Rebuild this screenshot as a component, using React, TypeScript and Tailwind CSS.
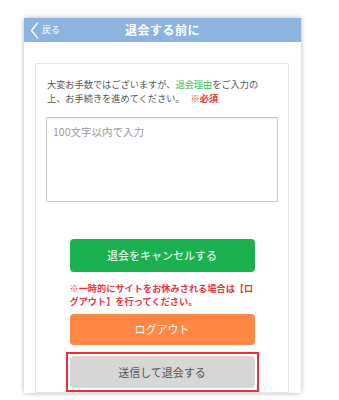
export default function App() {
  return (
    <div
      className="w-[339px] h-[400px] bg-white overflow-hidden"
      style={{ fontFamily: '"Noto Sans CJK JP", "Noto Sans", sans-serif' }}
    >
      <div className="ml-[24px] mt-[18px] w-[277px] h-[375px] bg-white flex flex-col shadow-[0_0_5px_rgba(0,0,0,0.3)]">
        {/* Header */}
        <div className="relative h-[28px] bg-[#8db3e1] flex items-center justify-center">
          <div className="absolute left-[6px] top-0 h-full flex items-center gap-[3px] text-white">
            <svg width="9" height="17" viewBox="0 0 9 17" fill="none">
              <polyline points="7.5,1 1.5,8.5 7.5,16" stroke="white" strokeWidth="1.4" strokeLinecap="round" strokeLinejoin="round" />
            </svg>
            <span className="text-[9px]">戻る</span>
          </div>
          <h1 className="text-white text-[12px] font-bold tracking-[0.5px]">退会する前に</h1>
        </div>

        <div className="flex-1 pl-[11px] pr-[12px] pt-[21px]">
          <div className="h-full border border-[#e6e6e6] px-[10px] pt-[13px] flex flex-col">
            <p className="text-[9.2px] leading-[14px] text-[#555] whitespace-nowrap pl-[1px]">
              大変お手数ではございますが、<span className="text-[#3cc24a]">退会理由</span>をご入力の
              <br />
              上、お手続きを進めてください。
              <span className="text-[#f0323c] font-bold ml-[6px]">※必須</span>
            </p>

            <textarea
              className="mt-[12px] h-[85px] w-full border border-[#c8c8c8] rounded-[1px] px-[6px] py-[6px] text-[10.5px] text-[#555] placeholder-[#9a9a9a] resize-none outline-none shadow-[inset_0_1px_2px_rgba(0,0,0,0.08)]"
              placeholder="100文字以内で入力"
            />

            <div className="w-[185px] mx-auto flex flex-col">
              <button className="mt-[37px] h-[33px] rounded-[4px] bg-[#1cb14f] text-white text-[11px]">
                退会をキャンセルする
              </button>

              <p className="mt-[10px] text-[9.2px] leading-[13px] font-bold text-[#ea3440] whitespace-nowrap">
                ※一時的にサイトをお休みされる場合は【ロ
                <br />
                グアウト】を行ってください。
              </p>

              <button className="mt-[6px] h-[31px] rounded-[4px] bg-[#ff8644] text-white text-[11px]">
                ログアウト
              </button>
            </div>

            <div className="mt-[7px] w-[193px] mx-auto border-2 border-[#e8303c] p-[2px]">
              <button className="w-full h-[32px] rounded-[4px] bg-[#d7d7d7] text-[#555] text-[11px]">
                送信して退会する
              </button>
            </div>
          </div>
        </div>
      </div>
    </div>
  )
}
